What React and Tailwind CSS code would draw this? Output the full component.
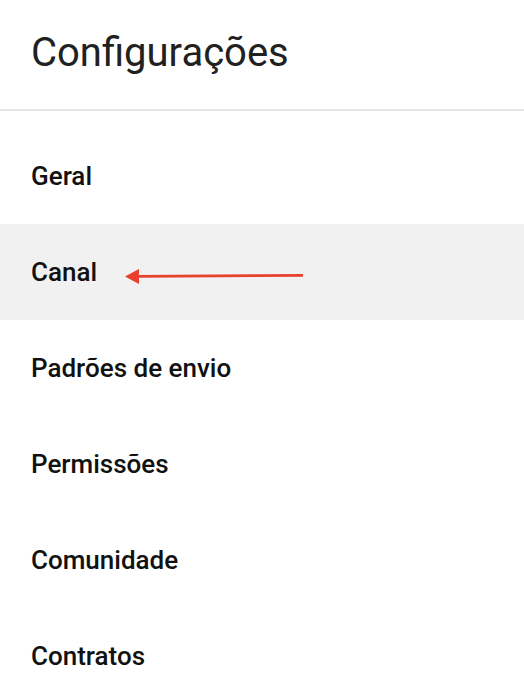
import React from "react";

const items = ["Geral", "Canal", "Padrões de envio", "Permissões", "Comunidade", "Contratos"];

function Arrow() {
    return (
        <svg className="absolute left-[120px] top-[40px]" width="190" height="24" viewBox="0 0 190 24">
            <line x1="17" y1="12.4" x2="183" y2="11.4" stroke="#e8402a" strokeWidth="2.8" />
            <polygon points="5,12.5 19,5 19,20" fill="#e8402a" />
        </svg>
    );
}

export default function App() {
    return (
        <div className="min-h-screen bg-white text-[#212121]" style={{ fontFamily: "Roboto, 'Liberation Sans', sans-serif" }}>
            <div className="h-[111px] flex items-center px-[31px] border-b-2 border-[#e6e6e6]">
                <h1 className="text-[40px] font-normal leading-none -mt-[4px]">Configurações</h1>
            </div>
            <ul className="pt-[17px]">
                {items.map((item) => (
                    <li
                        key={item}
                        className={`relative h-[96px] flex items-center px-[31px] text-[26px] font-medium text-[#111] ${item === "Canal" ? "bg-[#f1f1f1]" : ""}`}
                    >
                        {item}
                        {item === "Canal" && <Arrow />}
                    </li>
                ))}
            </ul>
        </div>
    );
}
